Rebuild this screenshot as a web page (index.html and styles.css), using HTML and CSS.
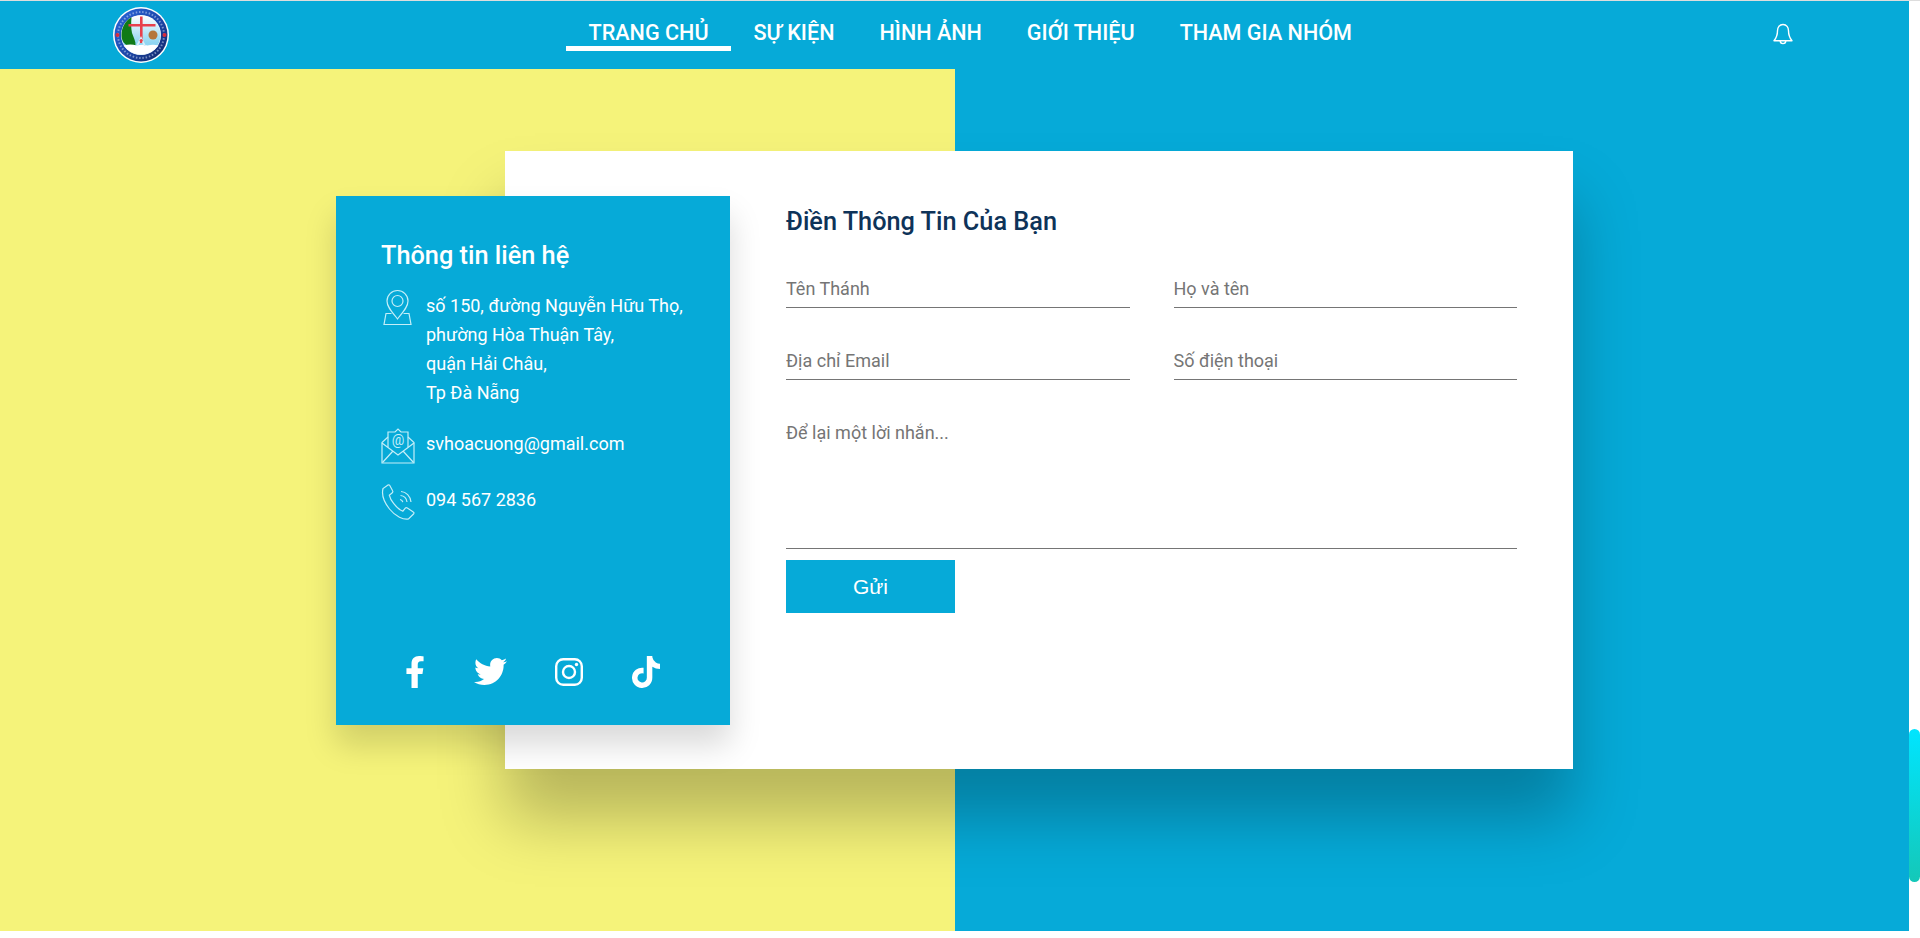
FILE: index.html
```html
<!DOCTYPE html>
<html lang="vi">
<head>
    <meta charset="UTF-8">
    <meta name="viewport" content="width=device-width, initial-scale=1.0">
    <title>Liên hệ</title>
    <link rel="stylesheet" href="styles.css">
</head>
<body>
    <div class="page">
        <header class="topbar">
            <a class="logo" href="#">
                <svg width="56" height="56" viewBox="0 0 56 56">
                    <defs>
                        <linearGradient id="sky" x1="0" y1="0" x2="0" y2="1">
                            <stop offset="0" stop-color="#ffffff"/>
                            <stop offset=".7" stop-color="#8fd6f2"/>
                            <stop offset="1" stop-color="#8fd6f2"/>
                        </linearGradient>
                        <linearGradient id="ring" x1="0" y1="0" x2="1" y2="1">
                            <stop offset="0" stop-color="#2a68dc"/>
                            <stop offset=".55" stop-color="#1c46a8"/>
                            <stop offset="1" stop-color="#10235f"/>
                        </linearGradient>
                    </defs>
                    <circle cx="28" cy="28" r="28" fill="#fff"/>
                    <circle cx="28" cy="28" r="26.500" fill="url(#ring)"/>
                    <circle cx="28" cy="28" r="23" fill="none" stroke="#dbe6fa" stroke-width="2" stroke-dasharray="1.500 1.800" opacity=".5"/>
                    <circle cx="28" cy="28" r="20" fill="#fff"/>
                    <circle cx="28" cy="28" r="19.500" fill="url(#sky)"/>
                    <path d="M18 10.500C12 14 8.500 21 8.500 28c0 5 2 8 5.500 10.500h8.500c.5-4-2-8-3.500-12.500-1-5-1-10-.5-15.500z" fill="#0f7a18"/>
                    <path d="M10.500 38.500c5-1.500 9-1.500 13 0 4-1 8-1 11 0 4-1 7-1 11 0-4 5-10 9-17.500 9s-13.500-4-17.500-9z" fill="#fff"/>
                    <path d="M27 9.500h2.600V36H27zM15.500 17h27v2.600h-27z" fill="#e8404c"/>
                    <circle cx="40" cy="28" r="4.500" fill="#b5763a"/>
                    <path d="M23 39l5-10 5 10h-2L28 33l-3 6z" fill="#d8eef9"/>
                    <circle cx="28.200" cy="33.500" r="1.600" fill="#e8404c"/>
                    <circle cx="4.500" cy="28" r="2" fill="#d92b3a"/>
                    <circle cx="51.500" cy="28" r="2" fill="#d92b3a"/>
                </svg>
            </a>
            <nav class="mainnav">
                <a class="navlink active" href="#">TRANG CHỦ</a>
                <a class="navlink" href="#">SỰ KIỆN</a>
                <a class="navlink" href="#">HÌNH ẢNH</a>
                <a class="navlink" href="#">GIỚI THIỆU</a>
                <a class="navlink" href="#">THAM GIA NHÓM</a>
            </nav>
            <a class="bell" href="#">
                <svg width="20" height="23" viewBox="0 0 20 23" fill="none" stroke="#fff" stroke-width="1.400" stroke-linejoin="round">
                    <path d="M10 1.500c-3.600 0-5.500 2.800-5.500 6.200 0 4.500-1 7-3.500 10h18c-2.500-3-3.500-5.500-3.500-10 0-3.400-1.900-6.200-5.500-6.200z"/>
                    <path d="M7.200 17.800a2.800 2.800 0 0 0 5.600 0"/>
                </svg>
            </a>
        </header>

        <section class="contact">
            <aside class="info-card">
                <h3 class="info-title">Thông tin liên hệ</h3>
                <div class="info-row address">
                    <svg class="info-icon pin" width="34" height="38" viewBox="0 0 34 38" fill="none" stroke="#c4eef8" stroke-width="1.200">
                        <path d="M16.500 31c-5.500-7-10.500-12-10.500-18a10.500 10.500 0 0 1 21 0c0 6-5 11-10.500 18z"/>
                        <circle cx="16.500" cy="13" r="5.500"/>
                        <path d="M10.500 25.500H5L3 36.500h27l-2-11h-5.500"/>
                    </svg>
                    <p>số 150, đường Nguyễn Hữu Thọ,<br>phường Hòa Thuận Tây,<br>quận Hải Châu,<br>Tp Đà Nẵng</p>
                </div>
                <div class="info-row email">
                    <svg class="info-icon" width="34" height="36" viewBox="0 0 34 36" fill="none" stroke="#c4eef8" stroke-width="1.200">
                        <path d="M7 19V4h7l3-3 3 3h7v15"/>
                        <text class="mail-at" x="17" y="16.500">@</text>
                        <path d="M7 9l-6 5.500V35h32V14.500L27 9"/>
                        <path d="M1 15l16 12 16-12M1.500 34.500L12 23M32.500 34.500L22 23"/>
                    </svg>
                    <p>svhoacuong@gmail.com</p>
                </div>
                <div class="info-row phone">
                    <svg class="info-icon" width="34" height="36" viewBox="0 0 34 36" fill="none" stroke="#c4eef8" stroke-width="1.200">
                        <path d="M7 1L2 4.500c-1.500 6 .5 13 6.500 20.500s14 11 19 10l5-5c.7-.8.6-1.500-.2-2l-6-4c-.8-.5-1.500-.4-2 .2l-2.500 3c-3-1-6-3.500-9-7.500-2.500-3-4-6-4.500-8.500l3-2.500c.7-.6.7-1.300.3-2L8.800 1.500C8.300.7 7.700.6 7 1z"/>
                        <path d="M19 15.500c1.500.2 2.500 1.200 2.800 2.700M19.500 11.500c3.500.3 6 2.800 6.500 6.500M20 7.500c5 .3 9.500 4.500 10 10.500"/>
                    </svg>
                    <p>094 567 2836</p>
                </div>
                <div class="socials">
                    <a href="#">
                        <svg width="18" height="32" viewBox="20 0 280 512" fill="#fff"><path d="M279 288l14-93h-89v-60c0-25 12-50 52-50h41V7s-37-7-72-7c-73 0-121 44-121 125v70H23v93h81v224h100V288z"/></svg>
                    </a>
                    <a href="#">
                        <svg width="33" height="27" viewBox="0 0 512 416" fill="#fff"><path d="M459 104c.3 4.500.3 9 .3 13.500C459.300 256 354 416 161 416c-60 0-115-17-161-47 8.500 1 16.500 1.300 25.300 1.300 49 0 94-17 130-45-46-1-85-31-98-73 6.500 1 13 1.600 20 1.600 9.500 0 19-1.300 28-3.600C57 240 21 197 21 146v-1.300c14 8 30 12.600 47 13.300C40 139 21.500 107 21.500 71c0-19.500 5-37 14.300-53 52 64 130 106 217 110.500-1.600-8-2.600-16-2.600-24C250.200 47 297 0 355 0c30 0 57.500 12.600 76.500 33 24-4.600 46.500-13.600 66.500-25.600-8 24.600-25 45.500-47 58.500 21-2.300 42-8 61-16.300-14.300 21-32.500 39.600-53 54.400z"/></svg>
                    </a>
                    <a href="#">
                        <svg width="28" height="28" viewBox="0 0 28 28" fill="none" stroke="#fff" stroke-width="2.400">
                            <rect x="1.200" y="1.200" width="25.600" height="25.600" rx="7"/>
                            <circle cx="14" cy="14" r="6"/>
                            <circle cx="21.500" cy="6.500" r="1.700" fill="#fff" stroke="none"/>
                        </svg>
                    </a>
                    <a href="#">
                        <svg width="28" height="32" viewBox="0 0 448 512" fill="#fff"><path d="M448 209.900a210 210 0 0 1-122.800-39.300v178.800A162.600 162.600 0 1 1 185 188.300v89.900a74.600 74.600 0 1 0 52.200 71.200V0h88a121 121 0 0 0 1.900 22.200 122.200 122.200 0 0 0 53.900 80.200 121.400 121.400 0 0 0 67 20.100z"/></svg>
                    </a>
                </div>
            </aside>

            <div class="form-card">
                <h3 class="form-title">Điền Thông Tin Của Bạn</h3>
                <form class="contact-form">
                    <input class="field" type="text" placeholder="Tên Thánh">
                    <input class="field" type="text" placeholder="Họ và tên">
                    <input class="field" type="text" placeholder="Địa chỉ Email">
                    <input class="field" type="text" placeholder="Số điện thoại">
                    <textarea class="field message" placeholder="Để lại một lời nhắn..."></textarea>
                    <button class="send" type="button">Gửi</button>
                </form>
            </div>
        </section>
    </div>
    <div class="scroll-thumb"></div>
</body>
</html>
```

FILE: styles.css
```css
* {
    box-sizing: border-box;
}
html, body {
    height: 100%;
    overflow: hidden;
}
body {
    margin: 0;
    background: white;
    font-family: Roboto, sans-serif;
    border-top: 1px solid #ddd;
}
a {
    text-decoration: none;
    color: white;
}
.page {
    width: 1909px;
}
.topbar {
    height: 68px;
    background: #06aad8;
    display: flex;
    align-items: flex-start;
    padding: 6px 116px 0 113px;
}
.logo {
    display: block;
    height: 56px;
    filter: blur(.4px);
}
.mainnav {
    display: flex;
    margin-left: 397px;
    padding-top: 12px;
}
.navlink {
    display: block;
    height: 32px;
    padding: 0 22.5px;
    font-size: 21.6px;
    font-weight: 500;
    line-height: 27px;
    color: white;
}
.navlink.active {
    border-bottom: 5px solid white;
}
.bell {
    display: block;
    margin-left: auto;
    padding-top: 16px;
}
.contact {
    height: 862px;
    display: flex;
    align-items: flex-start;
    padding: 82px 0 0 336px;
    background: linear-gradient(to right, #f5f37a 955px, #06aad8 955px);
}
.info-card {
    position: relative;
    z-index: 1;
    width: 394px;
    height: 528.7px;
    margin-top: 45px;
    padding: 44px 30px 0 45px;
    display: flex;
    flex-direction: column;
    background: #06aad8;
    color: white;
    box-shadow: 0 20px 30px rgba(0,0,0,.15);
}
.info-title {
    margin: 0 0 19px;
    font-size: 25.3px;
    font-weight: 500;
    line-height: 32px;
}
.info-row {
    display: flex;
    align-items: flex-start;
    gap: 11px;
    font-size: 18px;
    line-height: 29px;
}
.info-row p {
    margin: 0;
}
.info-icon {
    flex: none;
    width: 34px;
    margin-top: -1px;
}
.info-icon.pin {
    margin-top: -3px;
}
.mail-at {
    fill: #c4eef8;
    stroke: none;
    font-family: Roboto, sans-serif;
    font-size: 14px;
    text-anchor: middle;
}
.address {
    height: 138px;
}
.email {
    height: 56px;
}
.phone {
    height: 36px;
}
.socials {
    margin-top: auto;
    margin-bottom: 37px;
    display: flex;
    align-items: center;
}
.socials a {
    display: flex;
    align-items: center;
    height: 32px;
}
.socials a:nth-child(1) {
    margin-left: 25px;
}
.socials a:nth-child(2) {
    margin-left: 50px;
}
.socials a:nth-child(3) {
    margin-left: 48px;
}
.socials a:nth-child(4) {
    margin-left: 49px;
}
.form-card {
    width: 1068px;
    height: 618px;
    margin-left: -225px;
    padding: 55px 56px 0 281px;
    background: white;
    box-shadow: 0 50px 60px rgba(0,0,0,.25);
}
.form-title {
    margin: 0 0 32px;
    font-size: 25.3px;
    font-weight: 500;
    line-height: 32px;
    color: #0e3359;
}
.contact-form {
    display: grid;
    grid-template-columns: 343.5px 343.5px;
    column-gap: 44px;
}
.field {
    display: block;
    width: 100%;
    height: 38px;
    margin-bottom: 34px;
    padding: 0;
    border: none;
    border-bottom: 1px solid #757575;
    outline: none;
    background: none;
    font-family: Roboto, sans-serif;
    font-size: 18px;
    line-height: 24px;
    color: #333;
}
.field::placeholder {
    color: #757575;
    opacity: 1;
}
.message {
    grid-column: 1 / 3;
    height: 135px;
    margin-bottom: 11px;
    padding-top: 7px;
    resize: none;
}
.send {
    width: 169px;
    height: 53px;
    border: none;
    background: #06aad8;
    color: white;
    font-family: "Liberation Sans", Arial, sans-serif;
    font-size: 21px;
    cursor: pointer;
}
.scroll-thumb {
    position: fixed;
    top: 729px;
    right: 0;
    width: 11px;
    height: 153px;
    border-radius: 6px;
    background: linear-gradient(to bottom, #00e5ff, #14c8b8);
}
```
